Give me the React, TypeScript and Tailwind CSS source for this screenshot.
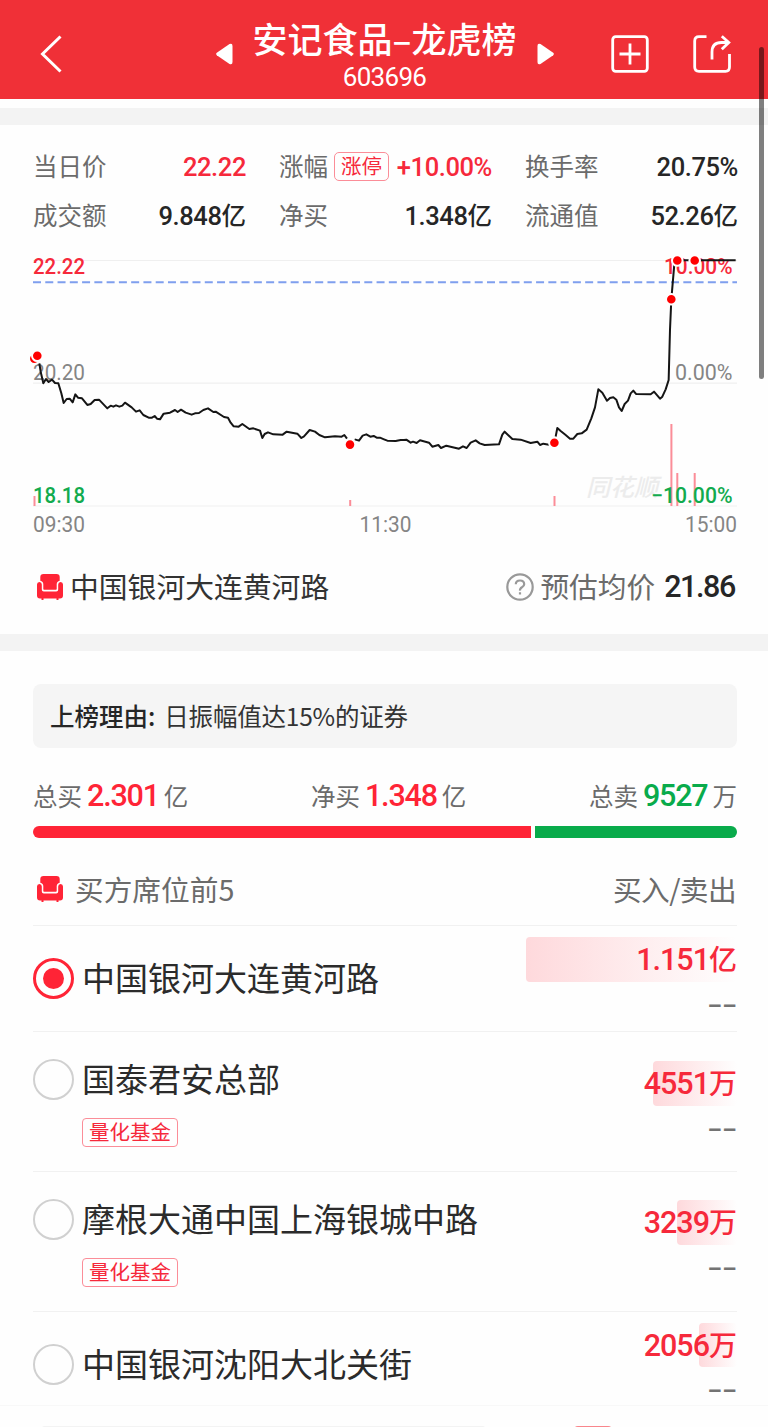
import React from "react";

const cjk = "font-['Noto_Sans_CJK_SC',sans-serif]";
const num = "font-['Roboto','Noto_Sans_CJK_SC',sans-serif]";

function Armchair() {
  return (
    <svg width="26" height="27" viewBox="0 0 26 27" fill="#ff2436" className="block shrink-0">
      <path d="M6.500 0h13q3.200 0 3.200 3v3.800q-3 0.700-3 3.500v4.700q0 0.800-0.800 0.800H7.100q-0.800 0-0.800-0.800v-4.700q0-2.800-3-3.500V3q0-3 3.200-3z" />
      <path d="M2.400 8q2.400 0 2.400 2.500v5q0 2 2 2h12.400q2 0 2-2v-5q0-2.500 2.400-2.500t2.400 2.500V21.500q0 3-3 3H21.500v1.500h-2V24.500h-13v1.500h-2V24.500H3Q0 24.500 0 21.500V10.500Q0 8 2.400 8z" />
    </svg>
  );
}

const MORNING =
  "118,100 122,125 130,160 138,147 146,156 156,149 165,159 175,160 184,190 191,219 200,207 209,206 218,217 226,193 234,203 246,205 262,225 272,222 284,210 297,209 322,235 332,227 340,230 348,226 358,230 367,227 375,218 395,232 408,245 419,241 430,255 446,263 456,263 464,258 471,266 480,268 491,251 510,248 525,240 533,246 543,239 557,248 575,254 585,250 597,249 610,240 624,235 640,246 647,245 672,261 684,263 692,278 701,289 716,290 727,282 748,297 760,295 780,302 787,324 794,312 804,307 820,313 848,314 860,305 892,311 904,324 912,319 929,300 945,305 958,315 975,322 1005,319 1025,320 1033,315 1041,326";
const MIDDAY =
  "1064,328 1077,332 1088,317 1099,313 1111,320 1121,318 1130,323 1140,323 1152,328 1162,332 1187,333 1202,330 1212,330 1219,329 1232,338 1239,335 1250,339 1260,331 1287,338 1297,350 1315,345 1323,354 1339,347 1377,356 1389,349 1400,354 1412,338 1427,331 1439,340 1454,345 1497,343 1507,314 1514,305 1537,327 1562,329 1592,339 1612,335 1620,345 1630,341 1647,344";
const AFTERNOON =
  "1667,320 1672,294 1682,303 1697,315 1710,326 1720,326 1732,312 1745,310 1760,299 1774,265 1785,232 1795,178 1807,188 1821,212 1830,204 1840,202 1849,209 1857,232 1865,243 1874,222 1884,212 1892,190 1900,182 1908,192 1952,193 1962,185 1980,206 1987,200 1997,178 2006,150 2010,0 2014,-92 2024,-209 2207,-209";

const DOTS = [
  [34.3, 358.6],
  [37.3, 355.8],
  [350, 444.6],
  [554.4, 442.7],
  [671.3, 299.3],
  [677.3, 260.5],
  [694.7, 260.5],
];

function Chart() {
  return (
    <svg width="768" height="296" viewBox="0 244 768 296" className="block" fontFamily="Roboto, sans-serif" fontSize="21.5">
      <path d="M33 260.500H737M33 383.200H737M33 506H737" stroke="#efefef" strokeWidth="1.200" />
      <path d="M33 282.200H737" stroke="#7f9fee" strokeWidth="2" strokeDasharray="8 4.270" />
      <text x="586" y="495.500" fontFamily="Noto Sans CJK SC, sans-serif" fontSize="24" fontWeight="500" fontStyle="italic" fill="#ececec" textLength="72">同花顺</text>
      <g fontWeight="500">
        <text x="33" y="274.200" fill="#f6293b" textLength="52" lengthAdjust="spacingAndGlyphs">22.22</text>
        <text x="664" y="274.200" fill="#f6293b" textLength="68.500" lengthAdjust="spacingAndGlyphs">10.00%</text>
        <text x="33" y="502.500" fill="#12ab4e" textLength="52" lengthAdjust="spacingAndGlyphs">18.18</text>
      </g>
      <g fill="#858585">
        <text x="33" y="380.300" textLength="52" lengthAdjust="spacingAndGlyphs">20.20</text>
        <text x="675" y="380.300" textLength="57.500" lengthAdjust="spacingAndGlyphs">0.00%</text>
        <text x="33" y="531.500" textLength="52" lengthAdjust="spacingAndGlyphs">09:30</text>
        <text x="359.500" y="531.500" textLength="52" lengthAdjust="spacingAndGlyphs">11:30</text>
        <text x="685" y="531.500" textLength="52" lengthAdjust="spacingAndGlyphs">15:00</text>
      </g>
      <path d="M34.500 496V506M350.200 500V506M554.500 496V506M671.400 424V506M677.300 473V506M694.700 473V506" stroke="#fb8d98" strokeWidth="2" />
      <text x="651" y="502.500" fontWeight="500" fill="#12ab4e" textLength="81.500" lengthAdjust="spacingAndGlyphs">−10.00%</text>
      <g transform="translate(0 330) scale(0.33333)" fill="none" stroke="#151515" strokeWidth="6" strokeLinejoin="round">
        <polyline points={MORNING} />
        <polyline points={MIDDAY} />
        <polyline points={AFTERNOON} />
      </g>
      {DOTS.map(([x, y]) => (
        <circle key={x} cx={x} cy={y} r="5.300" fill="#ff0000" stroke="#fefefe" strokeWidth="2" />
      ))}
    </svg>
  );
}

function Label({ children }: { children: React.ReactNode }) {
  return <span className={`${cjk} text-[24.5px] text-[#6b6b6b]`}>{children}</span>;
}

function Value({ value, unit, red }: { value: string; unit?: string; red?: boolean }) {
  return (
    <span className={`flex items-baseline font-medium ${red ? "text-[#f6293b]" : "text-[#262626]"}`}>
      <span className={`${num} text-[25.5px] tracking-[-0.4px]`}>{value}</span>
      {unit && <span className={`${cjk} text-[24.5px]`}>{unit}</span>}
    </span>
  );
}

function Stats() {
  const cell = "flex h-[49px] items-baseline justify-between leading-[49px]";
  return (
    <section className="grid grid-cols-[213px_213px_213px] gap-x-[33px] pl-[33px] pt-[16px]">
      <div className={cell}><Label>当日价</Label><Value value="22.22" red /></div>
      <div className={cell}>
        <Label>涨幅</Label>
        <span className={`${cjk} ml-[6px] mr-auto mt-[11px] flex h-[29px] w-[55px] items-center justify-center self-start rounded-[5px] border border-[#fb8d98] pb-[2px] text-[20.5px] leading-none text-[#f6293b]`}>涨停</span>
        <Value value="+10.00%" red />
      </div>
      <div className={cell}><Label>换手率</Label><Value value="20.75%" /></div>
      <div className={cell}><Label>成交额</Label><Value value="9.848" unit="亿" /></div>
      <div className={cell}><Label>净买</Label><Value value="1.348" unit="亿" /></div>
      <div className={cell}><Label>流通值</Label><Value value="52.26" unit="亿" /></div>
    </section>
  );
}

function Total({ label, value, unit, color }: { label: string; value: string; unit: string; color: string }) {
  return (
    <div className="flex items-baseline leading-[40px]">
      <Label>{label}</Label>
      <span className={`${num} mx-[5px] text-[30.5px] font-medium tracking-[-1.2px] ${color}`}>{value}</span>
      <Label>{unit}</Label>
    </div>
  );
}

type Seat = { name: string; tag?: string; amount: string; unit: string; selected?: boolean; row: string; left: string; right: string; bar: string };

const SEATS: Seat[] = [
  { name: "中国银河大连黄河路", amount: "1.151", unit: "亿", selected: true, row: "h-[106px]", left: "pt-[32px]", right: "pt-[11px]", bar: "w-[211px]" },
  { name: "国泰君安总部", tag: "量化基金", amount: "4551", unit: "万", row: "h-[140px]", left: "pt-[27px]", right: "pt-[29px]", bar: "w-[84px]" },
  { name: "摩根大通中国上海银城中路", tag: "量化基金", amount: "3239", unit: "万", row: "h-[140px]", left: "pt-[27px]", right: "pt-[28px]", bar: "w-[60px]" },
  { name: "中国银河沈阳大北关街", amount: "2056", unit: "万", row: "h-[94px]", left: "pt-[32px]", right: "pt-[11px]", bar: "w-[38px]" },
];

function SeatRow({ seat }: { seat: Seat }) {
  return (
    <div className={`flex justify-between border-t border-[#f1f1f1] ${seat.row}`}>
      <div className={seat.left}>
        <div className="flex h-[41px] items-center">
          <span className={`flex size-[41px] items-center justify-center rounded-full ${seat.selected ? "border-[3px] border-[#ff2436]" : "border-2 border-[#d0d0d0]"}`}>
            {seat.selected && <span className="size-[21px] rounded-full bg-[#ff2436]" />}
          </span>
          <span className={`${cjk} ml-[8px] pb-[3px] text-[33px] leading-[41px] text-[#2b2b2b]`}>{seat.name}</span>
        </div>
        {seat.tag && (
          <span className={`${cjk} ml-[49px] mt-[18px] flex h-[29px] w-[96px] items-center justify-center rounded-[4px] border border-[#fb8d98] pb-[2px] text-[20.5px] leading-none text-[#f6293b]`}>{seat.tag}</span>
        )}
      </div>
      <div className={`flex w-[211px] flex-col items-end ${seat.right}`}>
        <div className={`flex h-[45px] justify-end rounded-[4px] bg-linear-to-r from-[#fed9dc] to-[#fefefe] ${seat.bar}`}>
          <span className="flex items-baseline whitespace-nowrap font-medium leading-[43px] text-[#f6293b]">
            <span className={`${num} text-[30.5px] tracking-[-1px]`}>{seat.amount}</span>
            <span className={`${cjk} text-[28px]`}>{seat.unit}</span>
          </span>
        </div>
        <span className="mr-[-1px] mt-[2px] h-[40px] font-['Liberation_Sans',sans-serif] text-[23px] font-bold leading-[40px] tracking-[2px] text-[#737373]">––</span>
      </div>
    </div>
  );
}

export default function App() {
  return (
    <div className={`${cjk} relative h-[1427px] w-[768px] overflow-hidden bg-[#fefefe]`}>
      <header className="flex h-[99px] items-center bg-[#f03037] text-white">
        <svg width="24" height="40" viewBox="0 0 24 40" className="ml-[40px] mt-[9px]" fill="none" stroke="currentColor" strokeWidth="3">
          <path d="M20.500 2.500L2.500 20L20.500 37.500" />
        </svg>
        <svg width="17" height="22" viewBox="0 0 17 22" className="ml-[152px] mt-[9px]" fill="currentColor">
          <path d="M0.800 9.800L13.500 1Q16.500-0.300 16.500 3V19Q16.500 22.300 13.500 21L0.800 12.200Q-0.500 11 0.800 9.800z" />
        </svg>
        <div className="ml-[20px] flex w-[263px] flex-col items-center">
          <h1 className="mt-[8px] whitespace-nowrap text-[35px] font-medium leading-[44px]">安记食品–龙虎榜</h1>
          <span className={`${num} mt-[3px] text-[26px] leading-[29px] tracking-[-0.7px]`}>603696</span>
        </div>
        <svg width="17" height="22" viewBox="0 0 17 22" className="ml-[21px] mt-[9px]" fill="currentColor">
          <path d="M16.200 9.800L3.500 1Q0.500-0.300 0.500 3V19Q0.500 22.300 3.500 21L16.200 12.200Q17.500 11 16.200 9.800z" />
        </svg>
        <svg width="38" height="38" viewBox="0 0 38 38" className="ml-[57px] mt-[9px]" fill="none" stroke="currentColor" strokeWidth="2.800">
          <rect x="1.700" y="1.700" width="34.600" height="34.600" rx="3" />
          <path d="M8.500 19H29.500M19 8.500V29.500" />
        </svg>
        <svg width="38" height="38" viewBox="0 0 38 38" className="ml-[44px] mt-[9px]" fill="none" stroke="currentColor" strokeWidth="2.800">
          <path d="M13.500 1.700H6Q1.700 1.700 1.700 6V32Q1.700 36.300 6 36.300H32.500Q36.500 36.300 36.500 32V19" />
          <path d="M19 24.500V17Q19 7.500 28.500 7.500H35.500M28.800 1.200L35.800 7.500L28.800 14.200" />
        </svg>
      </header>
      <div className="mt-[9px] h-[17px] bg-[#f3f3f3]" />
      <Stats />
      <div className="mt-[5px]"><Chart /></div>

      <section className="flex h-[94px] items-center px-[33px]">
        <span className="ml-[4px] mr-[7px]"><Armchair /></span>
        <span className="pb-[1px] text-[28.8px] leading-none text-[#333]">中国银河大连黄河路</span>
        <svg width="28" height="28" viewBox="0 0 28 28" className="ml-auto mr-[6px]" fill="none" stroke="#999" strokeWidth="2.200">
          <circle cx="14" cy="14" r="12.700" />
          <path d="M9.800 11.200Q9.800 7.500 14 7.500T18.200 11.200Q18.200 13 16 14.200T14 17.600M14 19.200V21.500" />
        </svg>
        <span className="pb-[1px] text-[28.7px] leading-none text-[#6b6b6b]">预估均价</span>
        <span className={`${num} ml-[9px] text-[30.5px] font-medium leading-none tracking-[-1.4px] text-[#262626]`}>21.86</span>
      </section>
      <div className="h-[17px] bg-[#f3f3f3]" />

      <main className="px-[33px]">
        <div className="mt-[33px] flex h-[64px] w-[704px] items-center rounded-[8px] bg-[#f5f5f5] pl-[17px] text-[24.5px] text-[#333]">
          <b className="font-medium text-[#262626]">上榜理由:</b>
          <span className="ml-[9px] tracking-[-0.2px]">日振幅值达15%的证券</span>
        </div>
        <div className="mt-[28px] flex h-[40px] w-[704px] justify-between">
          <Total label="总买" value="2.301" unit="亿" color="text-[#ff2436]" />
          <Total label="净买" value="1.348" unit="亿" color="text-[#ff2436]" />
          <Total label="总卖" value="9527" unit="万" color="text-[#09ab4b]" />
        </div>
        <div className="mt-[10px] flex h-[12px] w-[704px] gap-[4px]">
          <div className="w-[498px] rounded-l-full bg-[#ff2436]" />
          <div className="flex-1 rounded-r-full bg-[#09ab4b]" />
        </div>
        <div className="flex h-[87px] w-[703px] items-center pt-[16px] text-[28.7px] text-[#6b6b6b]">
          <span className="ml-[4px] mr-[12px]"><Armchair /></span>
          <span className="pb-[2px]">买方席位前5</span>
          <span className="ml-auto pb-[2px] tracking-[-0.6px]">买入/卖出</span>
        </div>
        <div className="w-[704px]">
          {SEATS.map((seat) => <SeatRow key={seat.name} seat={seat} />)}
        </div>
      </main>
      <footer className="flex h-[22px] items-start border-t border-[#f8f8f8] bg-[#fefefe] pl-[41px] pt-[20px]">
        <div className="h-[40px] w-[445px] shrink-0 rounded-[4px] bg-[#f3f3f3]" />
        <div className="ml-[88px] h-[40px] w-[38px] shrink-0 rounded-[4px] bg-[#f9868c]" />
      </footer>
      <div className="absolute left-[759px] top-[47px] h-[332px] w-[5px] rounded-full bg-black/50" />
    </div>
  );
}
